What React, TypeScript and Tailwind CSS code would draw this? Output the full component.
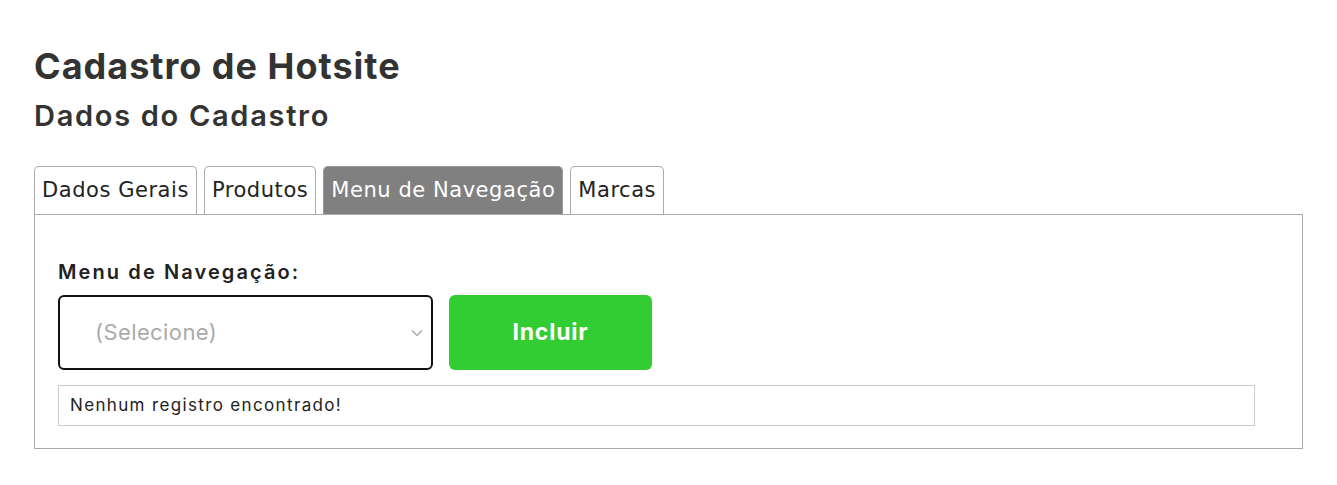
import React from 'react';

const heading = { fontFamily: 'Inter, "Noto Sans", sans-serif' };
const tabFont = { fontFamily: '"DejaVu Sans", Verdana, sans-serif' };

export default function App() {
  const tabs = ['Dados Gerais', 'Produtos', 'Menu de Navegação', 'Marcas'];
  const active = 2;

  return (
    <div className="min-h-[485px] w-full bg-white px-[34px] pt-[44px] text-[#333]" style={heading}>
      <h1 className="text-[36px] font-bold leading-[44px] tracking-[1px]">Cadastro de Hotsite</h1>
      <h2 className="mt-[10px] text-[29px] font-semibold leading-[36px] tracking-[1.7px]">Dados do Cadastro</h2>

      {/* Tabs */}
      <div className="mt-[32px] flex gap-[7px]" style={tabFont}>
        {tabs.map((t, i) => (
          <div
            key={t}
            className={
              i === active
                ? 'h-[48px] rounded-t-[5px] border border-b-0 border-[#999] bg-[#808080] px-[7px] pt-[10px] text-[21px] leading-[26px] tracking-[0.55px] text-white'
                : 'h-[48px] rounded-t-[5px] border border-b-0 border-[#aaa] bg-white px-[7px] pt-[10px] text-[21px] leading-[26px] tracking-[0.55px] text-[#222]'
            }
          >
            {t}
          </div>
        ))}
      </div>

      {/* Panel */}
      <div className="w-[1269px] border border-[#aaa] px-[23px] pb-[22px] pt-[44px]">
        <div className="text-[20px] font-semibold leading-[26px] tracking-[2.1px] text-[#222]">Menu de Navegação:</div>
        <div className="mt-[10px] flex gap-[16px]">
          <div className="flex h-[75px] w-[375px] items-center justify-between rounded-[6px] border-2 border-[#111] pl-[35px] pr-[8px]">
            <span className="text-[22px] tracking-[0.4px] text-[#aaa]">(Selecione)</span>
            <svg width="12" height="8" viewBox="0 0 12 8" fill="none" stroke="#aaa" strokeWidth="1.5">
              <path d="M1 1.5l5 5 5-5" />
            </svg>
          </div>
          <button className="flex h-[75px] w-[203px] items-center justify-center rounded-[6px] bg-[#32cd32] text-[23px] font-bold tracking-[0.8px] text-white">
            Incluir
          </button>
        </div>
        <div className="mt-[15px] flex h-[41px] w-[1197px] items-center border border-[#ccc] px-[11px] text-[17px] tracking-[1.35px] text-[#222]">
          Nenhum registro encontrado!
        </div>
      </div>
    </div>
  );
}
